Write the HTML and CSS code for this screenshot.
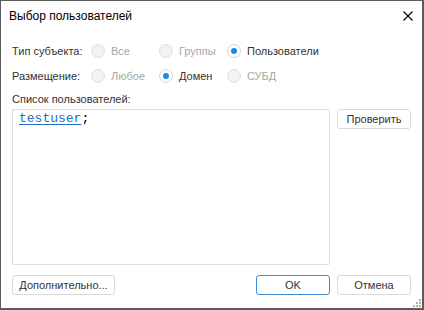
FILE: index.html
```html
<!DOCTYPE html>
<html lang="ru">
<head>
    <meta charset="UTF-8">
    <title>Выбор пользователей</title>
    <link rel="stylesheet" href="styles.css">
</head>
<body>
    <div class="dialog">
        <div class="titlebar">
            <span class="title">Выбор пользователей</span>
            <span class="close">
                <svg width="10" height="10" viewBox="0 0 10 10">
                    <path d="M0.5 0.5 L9.5 9.5 M9.5 0.5 L0.5 9.5" stroke="#000" stroke-width="1.1" fill="none"/>
                </svg>
            </span>
        </div>

        <div class="content">
            <div class="row">
                <span class="label">Тип субъекта:</span>
                <span class="radio disabled"><i></i>Все</span>
                <span class="radio disabled"><i></i>Группы</span>
                <span class="radio checked"><i></i>Пользователи</span>
            </div>
            <div class="row">
                <span class="label">Размещение:</span>
                <span class="radio disabled"><i></i>Любое</span>
                <span class="radio checked"><i></i>Домен</span>
                <span class="radio disabled"><i></i>СУБД</span>
            </div>

            <div class="caption">Список пользователей:</div>

            <div class="list-area">
                <div class="userlist"><span class="user">testuser</span>;</div>
                <div class="side">
                    <button class="btn">Проверить</button>
                </div>
            </div>

            <div class="footer">
                <button class="btn wide">Дополнительно...</button>
                <div class="spacer"></div>
                <button class="btn primary">OK</button>
                <button class="btn">Отмена</button>
            </div>
        </div>

        <div class="grip">
            <svg width="9" height="9" viewBox="0 0 9 9">
                <rect x="7" y="1" width="2" height="2" fill="#b4b4b4"/>
                <rect x="4" y="4" width="2" height="2" fill="#b4b4b4"/>
                <rect x="7" y="4" width="2" height="2" fill="#b4b4b4"/>
                <rect x="1" y="7" width="2" height="2" fill="#b4b4b4"/>
                <rect x="4" y="7" width="2" height="2" fill="#b4b4b4"/>
                <rect x="7" y="7" width="2" height="2" fill="#b4b4b4"/>
            </svg>
        </div>
    </div>
</body>
</html>
```

FILE: styles.css
```css
body {
    margin: 0;
    padding: 0;
    background-color: #fff;
    font-family: "Liberation Sans", Arial, sans-serif;
    font-size: 11px;
    color: #333;
}

.dialog {
    position: relative;
    width: 424px;
    height: 310px;
    box-sizing: border-box;
    border: 1px solid #5c5c5c;
    border-right-width: 2px;
    border-bottom-width: 2px;
    background-color: #fff;
    display: flex;
    flex-direction: column;
}

.titlebar {
    height: 30px;
    display: flex;
    align-items: center;
    justify-content: space-between;
    padding: 0 9px 0 8px;
}

.title {
    color: #000;
    font-size: 12px;
}

.close {
    display: flex;
}

.content {
    flex: 1;
    display: flex;
    flex-direction: column;
    padding: 10px 11px 13px 11px;
}

.row {
    display: flex;
    align-items: center;
    height: 20px;
    margin-bottom: 5px;
}

.label {
    width: 79px;
    flex-shrink: 0;
    white-space: nowrap;
}

.radio {
    display: flex;
    align-items: center;
    width: 68px;
    flex-shrink: 0;
    white-space: nowrap;
}

.radio i {
    width: 14px;
    height: 14px;
    flex-shrink: 0;
    box-sizing: border-box;
    border-radius: 50%;
    border: 1px solid #d4d4d4;
    background-color: #fff;
    margin-right: 6px;
    display: flex;
    align-items: center;
    justify-content: center;
}

.radio.disabled {
    color: #a6a6a6;
}

.radio.disabled i {
    background-color: #f2f2f2;
    border-color: #e0e0e0;
}

.radio.checked i::after {
    content: "";
    width: 6px;
    height: 6px;
    border-radius: 50%;
    background-color: #1e88d6;
}

.caption {
    line-height: 16px;
    margin-bottom: 2px;
}

.list-area {
    display: flex;
    height: 156px;
    margin-bottom: 10px;
}

.userlist {
    width: 318px;
    flex-shrink: 0;
    box-sizing: border-box;
    border: 1px solid #dcdcdc;
    border-radius: 2px;
    padding: 1px 6px;
    font-family: "Liberation Mono", "Courier New", monospace;
    font-size: 13px;
    line-height: 16px;
    color: #000;
}

.user {
    color: #1f6fc5;
    text-decoration: underline;
    text-underline-offset: 2px;
}

.side {
    margin-left: 7px;
}

.btn {
    width: 74px;
    height: 20px;
    box-sizing: border-box;
    border: 1px solid #dadada;
    border-radius: 3px;
    background-color: #fff;
    font-family: "Liberation Sans", Arial, sans-serif;
    font-size: 11px;
    color: #333;
    padding: 0;
}

.btn.wide {
    width: 103px;
}

.btn.primary {
    border-color: #3c8bd4;
    margin-right: 7px;
}

.footer {
    display: flex;
    height: 20px;
}

.spacer {
    flex: 1;
}

.grip {
    position: absolute;
    right: 1px;
    bottom: 1px;
    display: flex;
}
```
